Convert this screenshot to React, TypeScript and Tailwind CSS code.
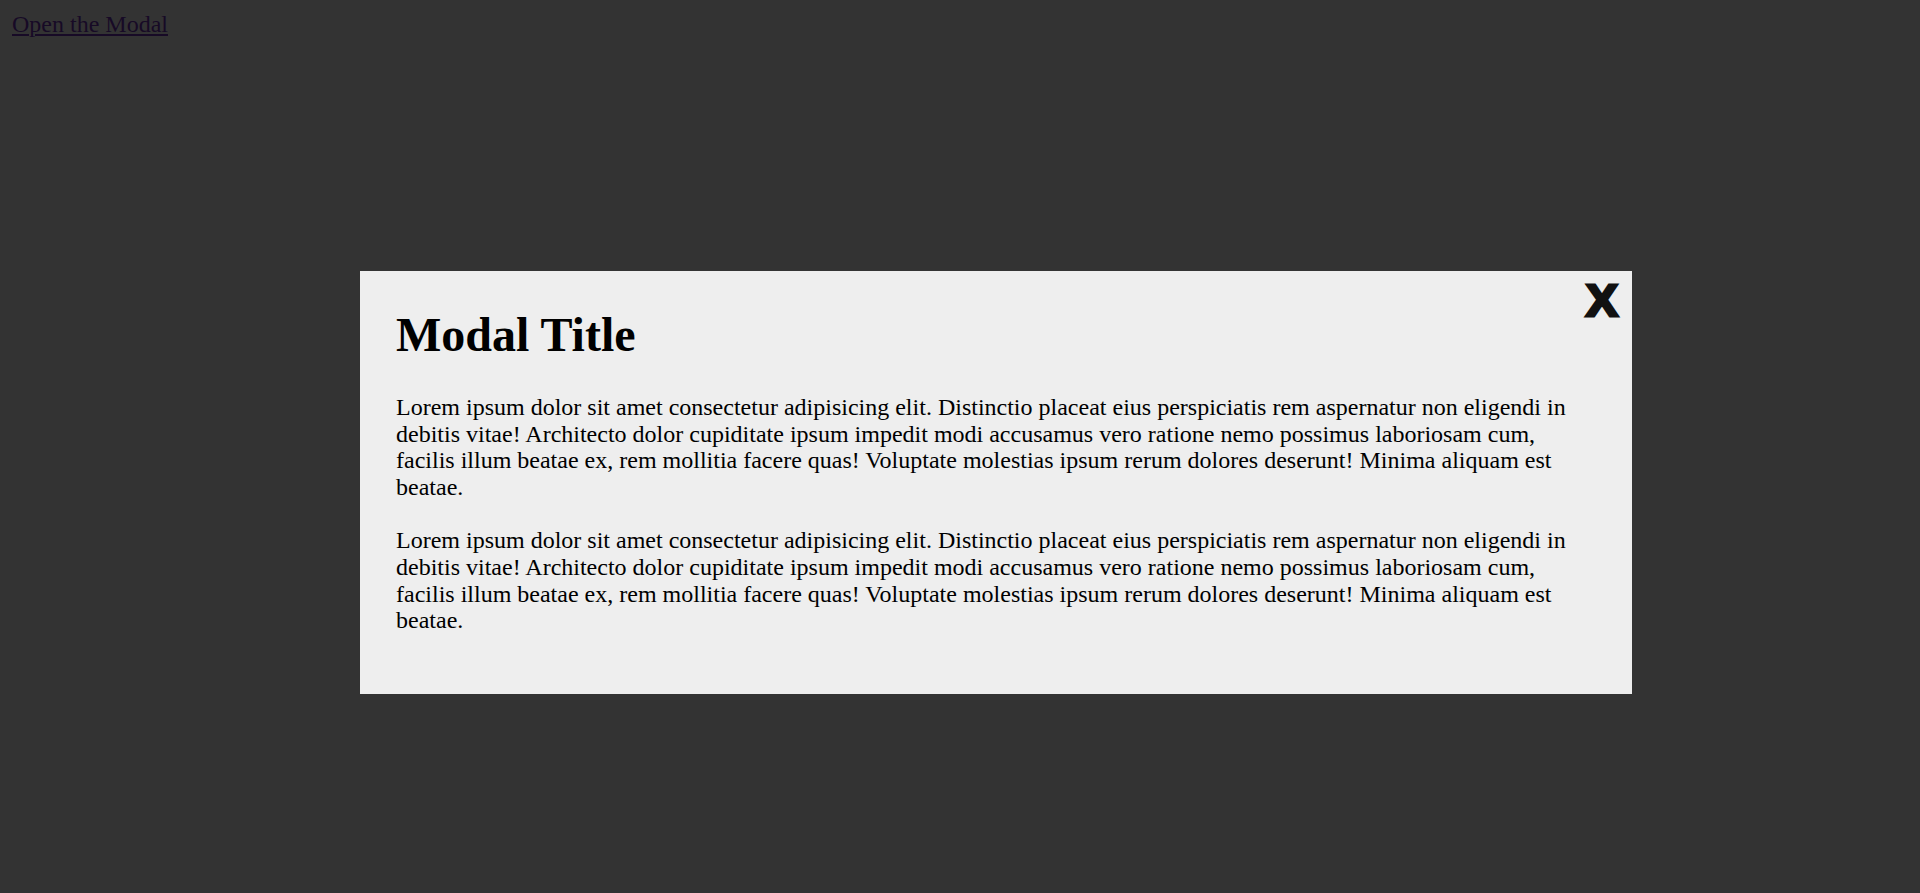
import React from "react";

const LOREM =
  "Lorem ipsum dolor sit amet consectetur adipisicing elit. Distinctio placeat eius perspiciatis rem aspernatur non eligendi in debitis vitae! Architecto dolor cupiditate ipsum impedit modi accusamus vero ratione nemo possimus laboriosam cum, facilis illum beatae ex, rem mollitia facere quas! Voluptate molestias ipsum rerum dolores deserunt! Minima aliquam est beatae.";

export default function App() {
  return (
    <div className="relative w-full h-[893px] bg-[#333333] overflow-hidden font-['Liberation_Serif',serif]">
      <div className="pl-[12px] pt-[11px]">
        <a href="#" className="text-[24px] leading-[1.15] text-[#170a26] underline">
          Open the Modal
        </a>
      </div>
      <div className="absolute left-[360px] top-[271px] w-[1272px] h-[423px] bg-[#eeeeee] px-[36px] pt-[37px] text-black">
        <button className="absolute right-[15px] top-[7px] text-[45px] leading-none font-bold text-[#111111] font-['Liberation_Sans',sans-serif] [-webkit-text-stroke:3px_#111111] scale-x-[1.06]">
          X
        </button>
        <h1 className="text-[48px] leading-[1.107] font-bold m-0 mb-[33px]">Modal Title</h1>
        <p className="text-[24px] leading-[1.107] mb-[27px]">{LOREM}</p>
        <p className="text-[24px] leading-[1.107]">{LOREM}</p>
      </div>
    </div>
  );
}
